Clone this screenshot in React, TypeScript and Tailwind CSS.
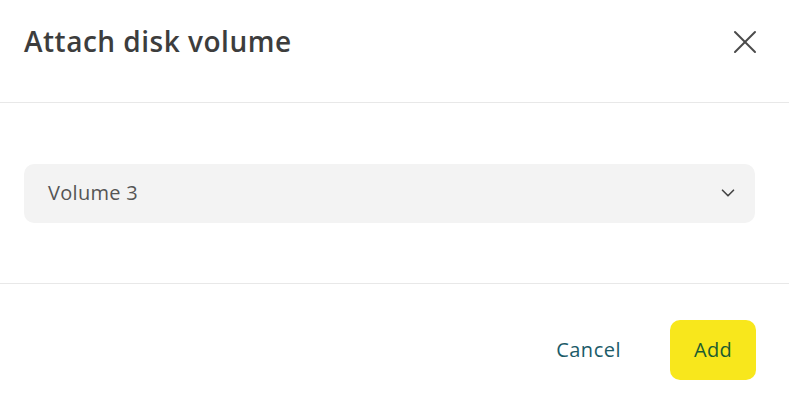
import * as React from "react"
import { X, ChevronDown } from "lucide-react"

export default function App() {
  return (
    <div
      className="w-[789px] h-[405px] bg-white flex flex-col"
      style={{ fontFamily: "'Open Sans', Lato, sans-serif" }}
    >
      <div className="h-[103px] flex items-start justify-between pl-6 pr-[24px] pt-[21px] border-b border-[#e8e8e8] shrink-0">
        <h2 className="text-[28px] leading-[40px] font-semibold text-[#3d3d3d] tracking-[0.5px]">Attach disk volume</h2>
        <button className="text-[#4a4a4a] mt-[1px]">
          <X className="w-[40px] h-[40px]" strokeWidth={1.2} />
        </button>
      </div>
      <div className="h-[181px] flex items-center pl-6 pr-[34px] border-b border-[#e8e8e8] shrink-0">
        <div className="w-full h-[59px] rounded-[10px] bg-[#f3f3f3] flex items-center justify-between pl-6 pr-[16px]">
          <span className="text-[20px] text-[#555555] tracking-[0.3px]">Volume 3</span>
          <ChevronDown className="w-[22px] h-[22px] text-[#444444]" strokeWidth={1.8} />
        </div>
      </div>
      <div className="flex items-start justify-end gap-[49px] pl-[33px] pr-[33px] pt-[36px]">
        <button className="h-[60px] text-[20px] font-medium text-[#1b5b68] tracking-[0.5px]">Cancel</button>
        <button className="h-[60px] w-[86px] rounded-[10px] bg-[#f8e71c] text-[20px] font-medium text-[#1c5c30] tracking-[0.3px]">
          Add
        </button>
      </div>
    </div>
  )
}
